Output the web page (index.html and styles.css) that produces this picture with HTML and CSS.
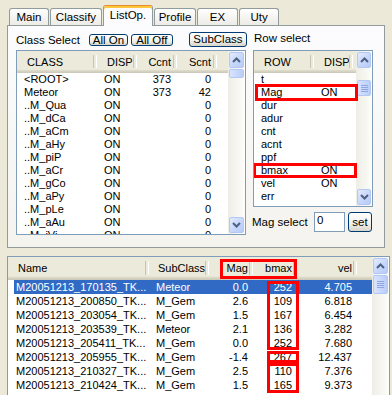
FILE: index.html
```html
<!DOCTYPE html>
<html>
<head>
<meta charset="utf-8">
<link rel="stylesheet" href="styles.css">
</head>
<body>
<div class="tabs">
  <div class="tab w-main">Main</div>
  <div class="tab w-classify">Classify</div>
  <div class="tab active w-listop">ListOp.</div>
  <div class="tab w-profile">Profile</div>
  <div class="tab w-ex">EX</div>
  <div class="tab w-uty">Uty</div>
</div>

<div class="panel">
  <div class="col-left">
    <div class="ctrl-row">
      <span class="lbl">Class Select</span>
      <button class="btn small b-allon">All On</button>
      <button class="btn small b-alloff">All Off</button>
      <button class="btn sub">SubClass</button>
    </div>
    <div class="listbox classbox">
      <div class="lb-content">
        <div class="hdr cgrid">
          <div class="hc">CLASS</div>
          <div class="hc">DISP</div>
          <div class="hc r">Ccnt</div>
          <div class="hc r">Scnt</div>
          <div class="hc last"></div>
        </div>
        <div class="rows">
          <div class="row cgrid"><span>&lt;ROOT&gt;</span><span>ON</span><span class="r">373</span><span class="r">0</span></div>
          <div class="row cgrid"><span>Meteor</span><span>ON</span><span class="r">373</span><span class="r">42</span></div>
          <div class="row cgrid"><span>..M_Qua</span><span>ON</span><span class="r"></span><span class="r">0</span></div>
          <div class="row cgrid"><span>..M_dCa</span><span>ON</span><span class="r"></span><span class="r">0</span></div>
          <div class="row cgrid"><span>..M_aCm</span><span>ON</span><span class="r"></span><span class="r">0</span></div>
          <div class="row cgrid"><span>..M_aHy</span><span>ON</span><span class="r"></span><span class="r">0</span></div>
          <div class="row cgrid"><span>..M_piP</span><span>ON</span><span class="r"></span><span class="r">0</span></div>
          <div class="row cgrid"><span>..M_aCr</span><span>ON</span><span class="r"></span><span class="r">0</span></div>
          <div class="row cgrid"><span>..M_gCo</span><span>ON</span><span class="r"></span><span class="r">0</span></div>
          <div class="row cgrid"><span>..M_aPy</span><span>ON</span><span class="r"></span><span class="r">0</span></div>
          <div class="row cgrid"><span>..M_pLe</span><span>ON</span><span class="r"></span><span class="r">0</span></div>
          <div class="row cgrid"><span>..M_aAu</span><span>ON</span><span class="r"></span><span class="r">0</span></div>
          <div class="row cgrid"><span>..M_iVi</span><span>ON</span><span class="r"></span><span class="r">0</span></div>
        </div>
      </div>
      <div class="vscroll">
        <div class="sb-btn"><svg width="9" height="6" viewBox="0 0 9 6"><polyline points="1,5 4.5,1.5 8,5" fill="none" stroke="#4D6185" stroke-width="2"/></svg></div>
        <div class="sb-thumb tiny"></div>
        <div class="sb-track"></div>
        <div class="sb-btn"><svg width="9" height="6" viewBox="0 0 9 6"><polyline points="1,1 4.5,4.5 8,1" fill="none" stroke="#4D6185" stroke-width="2"/></svg></div>
      </div>
    </div>
  </div>

  <div class="col-right">
    <div class="row-label">Row select</div>
    <div class="listbox rowbox">
      <div class="lb-content">
        <div class="hdr rgrid">
          <div class="hc">ROW</div>
          <div class="hc">DISP</div>
          <div class="hc last"></div>
        </div>
        <div class="rows">
          <div class="row rgrid"><span>t</span><span></span></div>
          <div class="row rgrid"><span>Mag</span><span>ON</span></div>
          <div class="row rgrid"><span>dur</span><span></span></div>
          <div class="row rgrid"><span>adur</span><span></span></div>
          <div class="row rgrid"><span>cnt</span><span></span></div>
          <div class="row rgrid"><span>acnt</span><span></span></div>
          <div class="row rgrid"><span>ppf</span><span></span></div>
          <div class="row rgrid"><span>bmax</span><span>ON</span></div>
          <div class="row rgrid"><span>vel</span><span>ON</span></div>
          <div class="row rgrid"><span>err</span><span></span></div>
        </div>
      </div>
      <div class="vscroll">
        <div class="sb-btn"><svg width="9" height="6" viewBox="0 0 9 6"><polyline points="1,5 4.5,1.5 8,5" fill="none" stroke="#4D6185" stroke-width="2"/></svg></div>
        <div class="sb-thumb grip rb-thumb"></div>
        <div class="sb-track"></div>
        <div class="sb-btn"><svg width="9" height="6" viewBox="0 0 9 6"><polyline points="1,1 4.5,4.5 8,1" fill="none" stroke="#4D6185" stroke-width="2"/></svg></div>
      </div>
      <div class="hl hl-mag"></div>
      <div class="hl hl-bmax"></div>
    </div>
    <div class="mag-row">
      <span class="lbl mag-lbl">Mag select</span>
      <div class="input">0</div>
      <button class="btn set">set</button>
    </div>
  </div>
</div>

<div class="listbox biglist">
  <div class="lb-content">
    <div class="hdr bgrid bhdr">
      <div class="hc">Name</div>
      <div class="hc sc">SubClass</div>
      <div class="hc r">Mag</div>
      <div class="hc r">bmax</div>
      <div class="hc r">vel</div>
      <div class="hc last"></div>
    </div>
    <div class="rows">
      <div class="brow sel"><span class="nm">M20051213_170135_TK...</span><span class="sc">Meteor</span><span class="r">0.0</span><span class="r">252</span><span class="r">4.705</span></div>
      <div class="brow"><span class="nm">M20051213_200850_TK...</span><span class="sc">M_Gem</span><span class="r">2.6</span><span class="r">109</span><span class="r">6.818</span></div>
      <div class="brow"><span class="nm">M20051213_203054_TK...</span><span class="sc">M_Gem</span><span class="r">1.5</span><span class="r">167</span><span class="r">6.454</span></div>
      <div class="brow"><span class="nm">M20051213_203539_TK...</span><span class="sc">Meteor</span><span class="r">2.1</span><span class="r">136</span><span class="r">3.282</span></div>
      <div class="brow"><span class="nm">M20051213_205411_TK...</span><span class="sc">M_Gem</span><span class="r">0.0</span><span class="r">252</span><span class="r">7.680</span></div>
      <div class="brow"><span class="nm">M20051213_205955_TK...</span><span class="sc">M_Gem</span><span class="r">-1.4</span><span class="r">267</span><span class="r">12.437</span></div>
      <div class="brow"><span class="nm">M20051213_210327_TK...</span><span class="sc">M_Gem</span><span class="r">2.5</span><span class="r">110</span><span class="r">7.376</span></div>
      <div class="brow"><span class="nm">M20051213_210424_TK...</span><span class="sc">M_Gem</span><span class="r">1.5</span><span class="r">165</span><span class="r">9.373</span></div>
    </div>
  </div>
  <div class="vscroll">
    <div class="sb-btn"><svg width="9" height="6" viewBox="0 0 9 6"><polyline points="1,5 4.5,1.5 8,5" fill="none" stroke="#4D6185" stroke-width="2"/></svg></div>
    <div class="sb-thumb grip big-thumb"></div>
    <div class="sb-track"></div>
  </div>
  <div class="hl hl-hdr"></div>
  <div class="hl hl-b1"></div>
  <div class="hl hl-b2"></div>
  <div class="hl hl-b3"></div>
</div>
</body>
</html>
```

FILE: styles.css
```css
* { box-sizing: border-box; }

body {
  margin: 0;
  width: 392px;
  height: 395px;
  overflow: hidden;
  background: #ECE9D8;
  font-family: "Liberation Sans", Arial, sans-serif;
  font-size: 11px;
  color: #000;
}

/* ---------- tabs ---------- */
.tabs {
  display: flex;
  align-items: flex-end;
  gap: 1px;
  height: 25px;
  padding-left: 9px;
}
.tab {
  height: 17px;
  border: 1px solid #919B9C;
  border-bottom: none;
  border-radius: 3px 3px 0 0;
  background: linear-gradient(#FFFFFF, #ECEBE6);
  font-size: 11.5px;
  line-height: 16px;
  text-align: center;
}
.tab.active {
  height: 21px;
  margin-bottom: -1px;
  position: relative;
  z-index: 1;
  background: #FCFCFE;
  border-top-color: #E68B2C;
  box-shadow: inset 0 2px 0 #FFC83C;
  line-height: 19px;
}
.w-main { width: 40px; }
.w-classify { width: 52px; }
.w-listop { width: 50px; }
.w-profile { width: 42px; }
.w-ex { width: 41px; }
.w-uty { width: 40px; }

/* ---------- panel ---------- */
.panel {
  margin-left: 7px;
  width: 378px;
  height: 223px;
  border: 1px solid #919B9C;
  background: linear-gradient(#FCFCFE, #F4F3EE);
  display: flex;
  gap: 6px;
  padding: 6px 0 0 8px;
}
.col-left { width: 231px; }
.col-right { width: 120px; display: flex; flex-direction: column; }

.ctrl-row {
  height: 15px;
  display: flex;
  align-items: center;
  margin-bottom: 3px;
}
.lbl { font-size: 11.5px; line-height: 12px; }

.btn {
  font-family: "Liberation Sans", Arial, sans-serif;
  font-size: 11.5px;
  color: #000;
  padding: 0;
  border: 1px solid #003C74;
  border-radius: 3px;
  background: linear-gradient(#FFFFFF, #F0F0EA 60%, #D8D5C9);
  text-align: center;
}
.btn.small { height: 12px; line-height: 10px; }
.b-allon { width: 39px; margin-left: 9px; }
.b-alloff { width: 42px; margin-left: 3px; }
.btn.sub { width: 58px; height: 15px; line-height: 13px; margin-left: 16px; }

.row-label { height: 15px; line-height: 12px; font-size: 11.5px; padding-left: 1px; margin-bottom: 3px; }

/* ---------- list boxes ---------- */
.listbox {
  position: relative;
  display: flex;
  border: 1px solid #7F9DB9;
  background: #FFFFFF;
  overflow: hidden;
}
.classbox { width: 230px; height: 185px; }
.rowbox { width: 120px; height: 157px; }
.lb-content { flex: 1; overflow: hidden; }

.hdr {
  height: 22px;
  background: linear-gradient(#EBEADB 0, #EBEADB 84%, #E2DECD 86%, #D6D2C2 93%, #CBC7B8 100%);
}
.hc {
  position: relative;
  padding-left: 10px;
  line-height: 22px;
  white-space: nowrap;
}
.hc::after {
  content: "";
  position: absolute;
  right: 0;
  top: 4px;
  bottom: 5px;
  width: 2px;
  border-left: 1px solid #C7C5B2;
  border-right: 1px solid #FFFFFF;
}
.hc.last::after { display: none; }
.hc.r { text-align: right; padding-left: 0; padding-right: 6px; }

.row { height: 13px; line-height: 13px; white-space: nowrap; }
.row span { padding-left: 7px; }
.row span.r { text-align: right; padding-left: 0; padding-right: 6px; }

.cgrid { display: grid; grid-template-columns: 80px 40px 40px 40px 11px; }
.rgrid { display: grid; grid-template-columns: 60px 39px 3px; }

/* ---------- scrollbars ---------- */
.vscroll {
  width: 17px;
  flex: none;
  display: flex;
  flex-direction: column;
  background: linear-gradient(to right, #EEEDE5, #FDFDFA);
  padding: 1px 1px 1px 1px;
}
.rowbox .vscroll { width: 16px; }
.sb-btn {
  height: 16px;
  flex: none;
  border: 1px solid #B4C8F6;
  border-radius: 2px;
  background: linear-gradient(135deg, #E3EBFE, #C4D5FA 60%, #B7CBF6);
  display: flex;
  align-items: center;
  justify-content: center;
}
.sb-thumb {
  flex: none;
  margin-top: 1px;
  border: 1px solid #B4C8F6;
  border-radius: 2px;
  background: linear-gradient(to right, #D8E3FD, #C6D6FB 60%, #BACDF7);
}
.sb-thumb.tiny { height: 9px; }
.sb-thumb.grip {
  background:
    linear-gradient(#8FA7DE, #8FA7DE) center calc(50% - 3px) / 7px 1px no-repeat,
    linear-gradient(#8FA7DE, #8FA7DE) center calc(50% - 1px) / 7px 1px no-repeat,
    linear-gradient(#8FA7DE, #8FA7DE) center calc(50% + 1px) / 7px 1px no-repeat,
    linear-gradient(#8FA7DE, #8FA7DE) center calc(50% + 3px) / 7px 1px no-repeat,
    linear-gradient(to right, #D8E3FD, #C6D6FB 60%, #BACDF7);
}
.rb-thumb { height: 16px; margin-top: 12px; }
.big-thumb { height: 19px; }
.sb-track { flex: 1; }

/* ---------- mag select ---------- */
.mag-row {
  margin-top: 5px;
  height: 20px;
  display: flex;
  align-items: center;
}
.mag-lbl { margin-left: -1px; width: 62px; }
.input {
  width: 31px;
  height: 20px;
  border: 1px solid #7F9DB9;
  background: #FFFFFF;
  font-size: 11.5px;
  line-height: 14px;
  padding-left: 2px;
}
.btn.set { width: 24px; height: 20px; margin-left: 3px; line-height: 17px; }

/* ---------- big list ---------- */
.biglist {
  margin: 8px 0 0 7px;
  width: 383px;
  height: 150px;
}
.bhdr { height: 23px; }
.bhdr .hc { line-height: 23px; }
.bgrid { display: grid; grid-template-columns: 141px 60px 44px 44px 60px 16px; }
.bhdr .hc.sc { padding-left: 9px; }
.bhdr .hc.r { padding-right: 5px; }

.brow {
  display: grid;
  grid-template-columns: 135px 60px 44px 44px 60px;
  margin-left: 6px;
  height: 14px;
  line-height: 14px;
  white-space: nowrap;
}
.brow .nm { padding-left: 2px; overflow: hidden; }
.brow .sc { padding-left: 7px; }
.brow .r { text-align: right; padding-right: 5px; }
.brow.sel { background: #316AC5; color: #FFFFFF; }

/* ---------- red annotation boxes ---------- */
.hl { position: absolute; border: 3px solid #FF0000; }
.hl-mag { left: 1px; top: 33px; width: 103px; height: 17px; }
.hl-bmax { left: -1px; top: 112px; width: 104px; height: 15px; }
.hl-hdr { left: 212px; top: 2px; width: 77px; height: 20px; }
.hl-b1 { left: 259px; top: 24px; width: 32px; height: 69px; }
.hl-b2 { left: 259px; top: 94px; width: 32px; height: 12px; }
.hl-b3 { left: 259px; top: 106px; width: 32px; height: 30px; }
```
